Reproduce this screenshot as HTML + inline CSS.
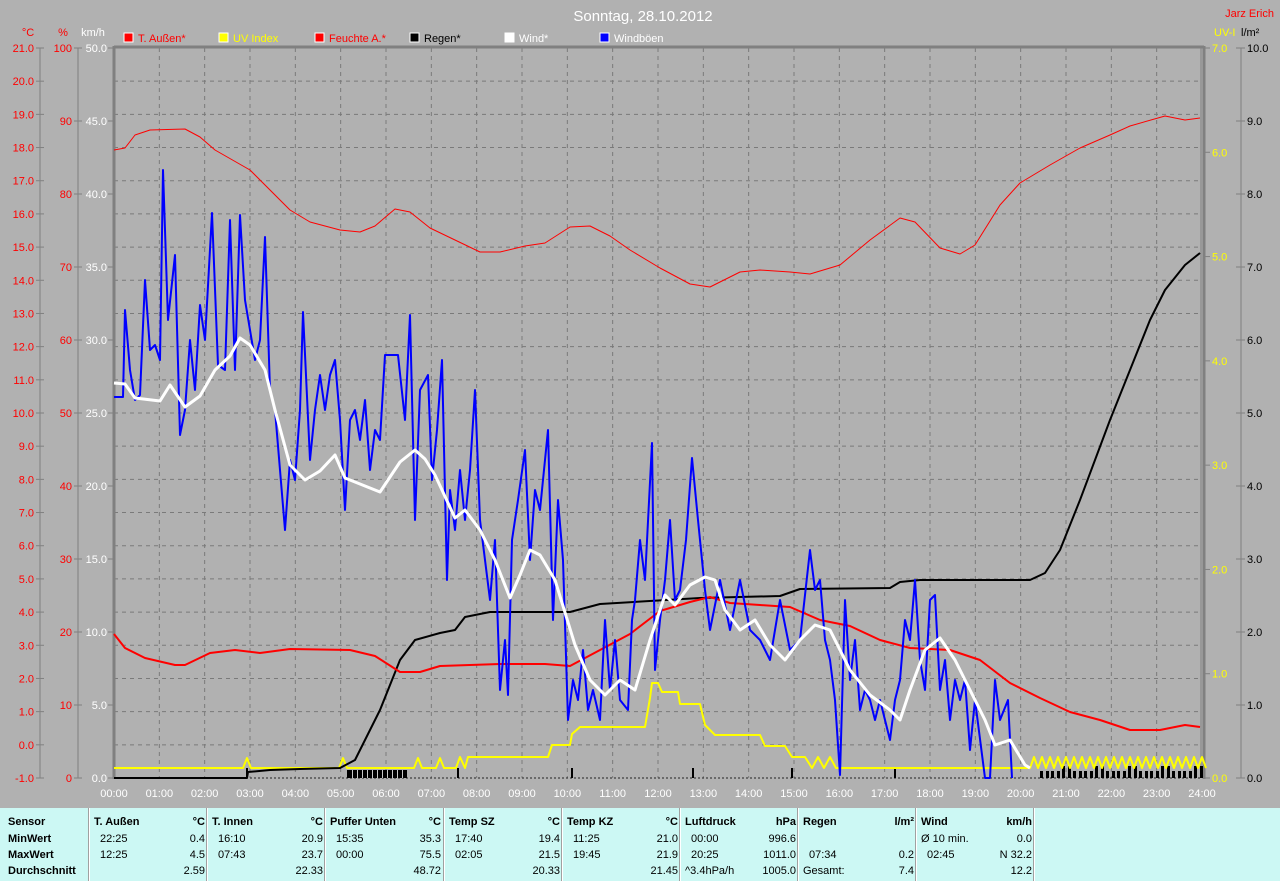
<!DOCTYPE html>
<html><head><meta charset="utf-8"><style>
html,body{margin:0;padding:0;background:#b1b1b1;width:1280px;height:881px;overflow:hidden;font-family:"Liberation Sans",sans-serif}
svg{position:absolute;left:0;top:0}
#tbl{position:absolute;left:0;top:808px;width:1280px;height:73px;background:#ccf8f4}
.c{position:absolute;top:0;height:73px;border-left:1px solid #a0a0a0;box-shadow:1px 0 #fff}
.t{position:absolute;font-size:11px;color:#000;white-space:nowrap}
.b{font-weight:bold}
</style></head><body>
<svg id="s" width="1280" height="808" xmlns="http://www.w3.org/2000/svg" font-family="Liberation Sans, sans-serif" font-size="11"></svg>
<div id="tbl"></div>
<script>
var s=document.getElementById('s'),h='';
function L(x1,y1,x2,y2,c,w,d){h+='<line x1="'+x1+'" y1="'+y1+'" x2="'+x2+'" y2="'+y2+'" stroke="'+c+'" stroke-width="'+(w||1)+'"'+(d?' stroke-dasharray="'+d+'"':'')+'/>';}
function T(x,y,t,c,a,sz){h+='<text x="'+x+'" y="'+y+'" fill="'+c+'" text-anchor="'+(a||'start')+'"'+(sz?' font-size="'+sz+'"':'')+'>'+t+'</text>';}
function P(pts,c,w){h+='<polyline fill="none" stroke="'+c+'" stroke-width="'+w+'" stroke-linejoin="round" points="'+pts.map(function(p){return p.join(',')}).join(' ')+'"/>';}
var X0=114,X1=1202,Y0=48,Y1=778;
for(var i=1;i<22;i++){var y=Y0+i*(730/22);L(X0,y,X1,y,'#7a7a7a',1,'4,4');}
for(var i=1;i<24;i++){var x=X0+i*(1088/24);L(x,Y0,x,Y1,'#7a7a7a',1,'4,4');}
L(X0,Y1,X1,Y1,'#222',1,'2,2');
L(X0,Y0-1,X1+2,Y0-1,'#808080',3);L(X0,Y0-2,X0,Y1+1,'#808080',3);L(X1+2,Y0-2,X1+2,Y1+1,'#808080',3);L(X1-1,Y0,X1-1,Y1,'#808080',1);
L(40,Y0,40,Y1,'#808080');L(78,Y0,78,Y1,'#808080');L(1241,Y0,1241,Y1,'#808080');
for(var i=0;i<=22;i++){var y=Y0+i*(730/22);L(36,y,44,y,'#808080');T(34,y+4,(21-i).toFixed(1),'#f00','end');}
for(var i=0;i<=10;i++){var y=Y0+i*73;L(74,y,82,y,'#808080');T(72,y+4,100-i*10,'#f00','end');L(108,y,114,y,'#808080');T(107,y+4,(50-i*5).toFixed(1),'#fff','end');L(1236,y,1245,y,'#808080');T(1247,y+4,(10-i).toFixed(1),'#000');}
for(var i=0;i<=7;i++){var y=Y0+i*(730/7);L(1203,y,1210,y,'#808080');T(1212,y+4,(7-i).toFixed(1),'#ff0');}
T(28,36,'°C','#f00','middle');T(63,36,'%','#f00','middle');T(93,36,'km/h','#fff','middle');T(1214,36,'UV-I','#ff0');T(1241,36,'l/m²','#000');
T(1274,17,'Jarz Erich','#f00','end');T(643,21,'Sonntag, 28.10.2012','#fff','middle',15);
for(var i=0;i<=24;i++){var x=X0+i*(1088/24);T(x,797,(i<10?'0':'')+i+':00','#fff','middle');}
var lg=[[124,'T. Außen*','#f00','#f00'],[219,'UV Index','#ff0','#ff0'],[315,'Feuchte A.*','#f00','#f00'],[410,'Regen*','#000','#000'],[505,'Wind*','#fff','#fff'],[600,'Windböen','#00f','#fff']];
lg.forEach(function(l){h+='<rect x="'+l[0]+'" y="33" width="9" height="9" fill="'+l[2]+'" stroke="#fff" stroke-width="1"/>';T(l[0]+14,42,l[1],l[3]);});
function bar(x,t,w){h+='<rect x="'+x+'" y="'+(778-t)+'" width="'+(w||2)+'" height="'+t+'" fill="#000"/>';}
bar(347,8,60);for(var x=352;x<406;x+=5)h+='<rect x="'+x+'" y="770" width="1" height="8" fill="#c8c8c8"/>';
[246,457,571,692,791,894].forEach(function(x){bar(x,10);});
for(var x=1040;x<1200;x+=5.5){bar(Math.round(x),(Math.round(x)%3?7:12),3);}
P([[114,150],[125,148],[135,135],[150,130],[185,129],[200,137],[215,150],[250,170],[290,210],[310,222],[340,230],[360,232],[375,226],[395,209],[410,212],[430,228],[455,240],[480,252],[500,252],[525,246],[545,243],[570,227],[590,226],[610,236],[630,250],[660,268],[690,284],[710,287],[740,272],[760,270],[790,272],[810,274],[840,265],[870,240],[900,218],[915,222],[940,248],[960,254],[975,245],[1000,205],[1020,183],[1050,165],[1080,148],[1110,135],[1130,126],[1165,116],[1185,120],[1200,118]],'#f00',1);
var uv=[[114,768],[243,768],[247,758],[251,768],[339,768],[343,758],[347,768],[414,768],[418,758],[422,768],[436,768],[440,758],[444,768],[456,768],[460,757],[465,768],[468,757],[548,757],[552,745],[570,745],[572,734],[580,727],[645,727],[650,698],[652,683],[658,683],[662,692],[678,692],[680,704],[700,704],[705,725],[715,735],[760,735],[765,746],[785,746],[792,757],[805,757],[812,768],[818,757],[824,768],[830,757],[836,768],[1030,768]];
for(var x=1030;x<1196;x+=16){uv.push([x+4,757],[x+8,768],[x+12,757],[x+16,768]);}
P(uv,'#ff0',2);
P([[114,778],[247,778],[248,772],[270,770],[300,769],[340,768],[355,760],[380,710],[400,660],[415,640],[440,633],[455,630],[465,617],[490,612],[570,612],[600,604],[700,598],[780,596],[800,589],[890,588],[900,582],[920,580],[1030,580],[1045,573],[1060,550],[1080,500],[1110,420],[1130,370],[1150,320],[1165,290],[1185,265],[1200,253]],'#000',2);
P([[114,634],[125,648],[145,658],[175,665],[185,665],[210,653],[235,650],[260,653],[290,649],[350,650],[375,656],[400,672],[420,672],[440,666],[470,665],[500,664],[545,664],[570,666],[600,650],[630,634],[660,611],[690,602],[710,597],[730,603],[760,605],[790,607],[820,620],[850,626],[880,640],[910,648],[950,650],[980,660],[1010,683],[1040,698],[1070,712],[1100,720],[1130,730],[1160,730],[1185,725],[1200,727]],'#f00',2);
P([[114,397],[123,397],[125,310],[130,370],[135,400],[140,395],[145,280],[150,350],[155,345],[160,360],[163,170],[168,320],[175,255],[180,435],[185,410],[190,340],[195,390],[200,305],[205,340],[212,213],[218,365],[225,370],[230,220],[235,370],[240,215],[245,300],[250,330],[255,360],[260,340],[265,237],[270,390],[275,410],[285,530],[290,460],[295,480],[300,410],[303,312],[310,460],[315,410],[320,375],[325,410],[330,375],[335,360],[340,420],[345,510],[350,420],[355,410],[360,440],[365,400],[370,470],[375,430],[380,440],[385,355],[398,355],[405,420],[410,315],[415,520],[420,390],[428,375],[432,480],[437,430],[442,360],[447,580],[450,490],[455,530],[460,470],[465,520],[470,470],[475,390],[480,520],[490,600],[495,540],[500,690],[505,640],[508,695],[512,540],[518,500],[525,450],[530,560],[535,490],[540,510],[548,430],[553,620],[558,500],[563,560],[568,720],[573,680],[578,700],[583,650],[588,710],[593,690],[600,720],[605,620],[610,690],[615,640],[620,700],[628,710],[632,620],[635,600],[640,540],[645,580],[652,443],[655,670],[660,620],[665,580],[670,520],[675,600],[680,590],[686,540],[692,458],[698,520],[705,590],[710,630],[720,580],[730,630],[740,580],[750,630],[760,640],[770,660],[780,600],[790,650],[800,640],[810,550],[815,590],[820,580],[825,640],[830,660],[835,700],[840,775],[845,600],[850,680],[855,640],[860,710],[865,690],[870,700],[875,720],[880,700],[890,740],[895,700],[900,680],[905,620],[910,640],[915,580],[920,660],[925,690],[930,600],[935,595],[940,690],[945,660],[950,720],[955,680],[960,700],[965,680],[970,750],[975,700],[985,778],[990,778],[995,680],[1000,720],[1008,700],[1012,778]],'#00f',2);
P([[114,383],[125,384],[135,398],[160,401],[170,385],[185,407],[200,396],[215,370],[230,356],[240,338],[250,345],[265,370],[275,410],[290,465],[305,480],[320,471],[335,455],[345,478],[360,484],[380,492],[400,462],[415,450],[425,459],[435,475],[455,518],[465,510],[480,530],[495,560],[510,598],[520,575],[530,550],[540,555],[555,580],[575,645],[590,680],[605,695],[620,680],[635,690],[650,640],[665,595],[675,605],[690,585],[705,577],[715,580],[725,610],[740,630],[755,620],[770,645],[785,660],[800,640],[815,625],[830,630],[850,670],[870,695],[890,710],[900,720],[910,690],[925,650],[940,638],[955,660],[970,690],[985,720],[995,745],[1010,740],[1025,765],[1030,768]],'#fff',3);
s.innerHTML=h;
var tb=document.getElementById('tbl'),th='';
[89,207,325,444,562,680,798,916,1034].forEach(function(x){th+='<div class="c" style="left:'+(x-1)+'px"></div>';});
var rows=[8,25,41,57];
function t(x,r,txt,b,right){th+='<div class="t'+(b?' b':'')+'" style="'+(right?'right:'+(1280-x)+'px':'left:'+x+'px')+';top:'+rows[r]+'px">'+txt+'</div>';}
['Sensor','MinWert','MaxWert','Durchschnitt'].forEach(function(v,i){t(8,i,v,1);});
var cols=[
[94,'T. Außen','°C',['22:25','0.4'],['12:25','4.5'],['','2.59']],
[212,'T. Innen','°C',['16:10','20.9'],['07:43','23.7'],['','22.33']],
[330,'Puffer Unten','°C',['15:35','35.3'],['00:00','75.5'],['','48.72']],
[449,'Temp SZ','°C',['17:40','19.4'],['02:05','21.5'],['','20.33']],
[567,'Temp KZ','°C',['11:25','21.0'],['19:45','21.9'],['','21.45']],
[685,'Luftdruck','hPa',['00:00','996.6'],['20:25','1011.0'],['^3.4hPa/h','1005.0']],
[803,'Regen','l/m²',['',''],['07:34','0.2'],['Gesamt:','7.4']],
[921,'Wind','km/h',['Ø 10 min.','0.0'],['02:45','N 32.2'],['','12.2']]];
cols.forEach(function(c){var x=c[0],r=x+111;t(x,0,c[1],1);t(r,0,c[2],1,1);
for(var i=1;i<=3;i++){var tx=c[2+i][0];t(x+((tx.charAt(0)=='^'||tx=='Gesamt:'||tx.charAt(0)=='Ø')?0:6),i,tx);t(r,i,c[2+i][1],0,1);}});
tb.innerHTML=th;
</script>
</body></html>
